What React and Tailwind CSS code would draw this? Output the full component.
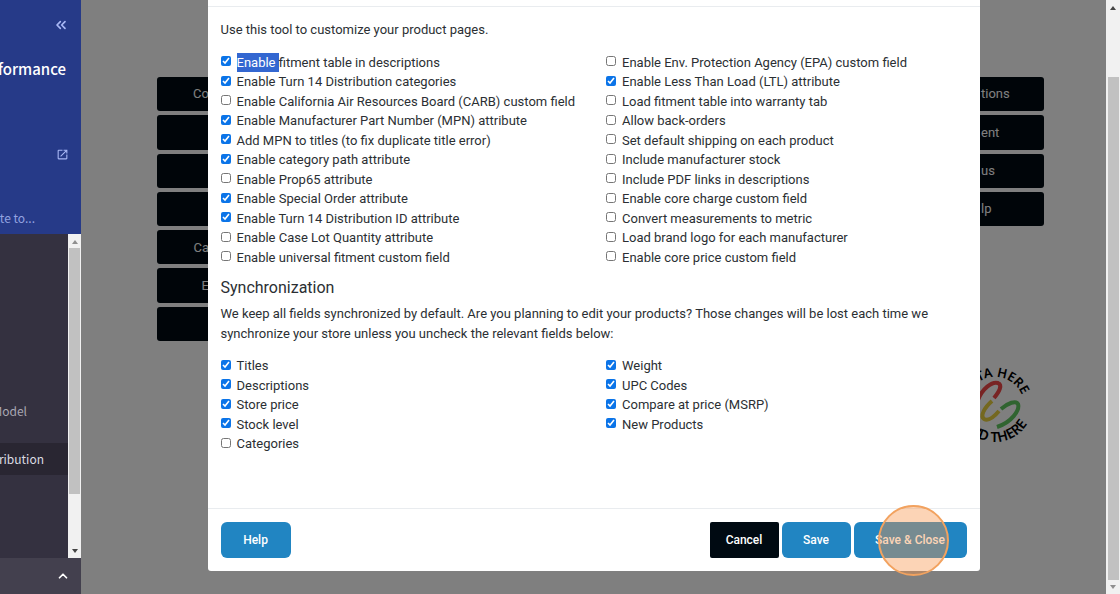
import React from "react";
import { ChevronsLeft, ChevronUp } from "lucide-react";
import { MdOpenInNew } from "react-icons/md";

const leftOptions = [
  ["fitment table in descriptions", true, "Enable "],
  ["Enable Turn 14 Distribution categories", true],
  ["Enable California Air Resources Board (CARB) custom field", false],
  ["Enable Manufacturer Part Number (MPN) attribute", true],
  ["Add MPN to titles (to fix duplicate title error)", true],
  ["Enable category path attribute", true],
  ["Enable Prop65 attribute", false],
  ["Enable Special Order attribute", true],
  ["Enable Turn 14 Distribution ID attribute", true],
  ["Enable Case Lot Quantity attribute", false],
  ["Enable universal fitment custom field", false],
];

const rightOptions = [
  ["Enable Env. Protection Agency (EPA) custom field", false],
  ["Enable Less Than Load (LTL) attribute", true],
  ["Load fitment table into warranty tab", false],
  ["Allow back-orders", false],
  ["Set default shipping on each product", false],
  ["Include manufacturer stock", false],
  ["Include PDF links in descriptions", false],
  ["Enable core charge custom field", false],
  ["Convert measurements to metric", false],
  ["Load brand logo for each manufacturer", false],
  ["Enable core price custom field", false],
];

const leftSync = [
  ["Titles", true],
  ["Descriptions", true],
  ["Store price", true],
  ["Stock level", true],
  ["Categories", false],
];

const rightSync = [
  ["Weight", true],
  ["UPC Codes", true],
  ["Compare at price (MSRP)", true],
  ["New Products", true],
];

function Option({ label, checked, selected }) {
  return (
    <label className="flex items-center gap-[6px] whitespace-pre">
      <input type="checkbox" defaultChecked={checked} className="mb-[2px] size-[10px] shrink-0 accent-[#0b74e8]" />
      <span>
        {selected && <span className="inline-block bg-[#3367d1] text-white">{selected}</span>}
        {label}
      </span>
    </label>
  );
}

function OptionColumn({ items }) {
  return (
    <div className="flex flex-col">
      {items.map(([label, checked, selected]) => (
        <Option key={label} label={label} checked={checked} selected={selected} />
      ))}
    </div>
  );
}

function Arrow({ down, className }) {
  return (
    <svg viewBox="0 0 6 4" className={className} fill="currentColor" aria-hidden="true">
      <path d={down ? "M0 0h6L3 4z" : "M0 4h6L3 0z"} />
    </svg>
  );
}

function Sidebar() {
  return (
    <aside className="flex w-[81px] shrink-0 flex-col overflow-hidden bg-[#343140] font-['Noto_Sans_CJK_SC',sans-serif]">
      <div className="flex h-[234px] shrink-0 flex-col items-end bg-[#263a88] pt-[17px]">
        <button aria-label="Collapse" className="mr-3 text-[#a9b8f5]">
          <ChevronsLeft className="size-4" strokeWidth={2.5} />
        </button>
        <p className="mt-6 mr-[15px] text-[15px] leading-6 font-medium text-white">formance</p>
        <a href="#store" aria-label="Open store" className="mt-[67px] mr-[12px] text-[#a9b8f5]">
          <MdOpenInNew className="size-[13px]" />
        </a>
        <p className="mt-[47px] mr-[46px] text-[12px] leading-5 whitespace-nowrap text-[#93a3e0]">ate to...</p>
      </div>
      <div className="flex flex-1">
        <nav className="flex flex-1 flex-col items-end overflow-hidden pt-[161px] text-[12px] text-[#a9a7b2]">
          <a href="#model" className="flex h-8 items-center pr-[41px]">Model</a>
          <a href="#distribution" className="mt-4 flex h-8 w-full items-center justify-end bg-[#292632] pr-[24px] text-[#dcdbe2]">tribution</a>
        </nav>
        <div className="flex w-[13px] flex-col items-center justify-between bg-[#f1f1f1] pt-[6px] pb-[5px]">
          <Arrow className="h-[4px] w-[6px] shrink-0 text-[#8f8f8f]" />
          <div className="mt-[4px] h-[246px] w-[11px] bg-[#c1c1c1]" />
          <Arrow down className="mt-auto h-[4px] w-[6px] shrink-0 text-[#444]" />
        </div>
      </div>
      <div className="flex h-[36px] shrink-0 items-center justify-end bg-[#43404e] pr-[11px]">
        <button aria-label="Expand" className="text-white">
          <ChevronUp className="size-[14px]" strokeWidth={3} />
        </button>
      </div>
    </aside>
  );
}

function Logo() {
  return (
    <svg viewBox="0 0 90 90" className="mr-[15px] size-[90px] overflow-visible" role="img" aria-label="Data here and there">
      <defs>
        <path id="topArc" d="M16 45a29 29 0 0 1 58 0" />
        <path id="bottomArc" d="M7 43a38 38 0 0 0 76 0" />
      </defs>
      <g fontFamily="Noto Sans, sans-serif" fontWeight="600" fontSize="13" fill="#000">
        <text textAnchor="middle"><textPath href="#topArc" startOffset="50%">DATA HERE</textPath></text>
        <text textAnchor="middle" fontSize="14"><textPath href="#bottomArc" startOffset="50%">AND THERE</textPath></text>
      </g>
      <g fill="none" strokeWidth="4">
        <path stroke="#f04848" d="M28 39C32 28 42 20 48 22c5 2 1 9-4 15" />
        <path stroke="#e8d040" d="M42 40c-8 7-12 15-8 18 4 2 10-2 15-8" />
        <path stroke="#60c860" d="M51 48c7-6 15-9 17-5 2 6-6 18-21 23" />
      </g>
    </svg>
  );
}

const tile = "flex-1 rounded-[3px] bg-[#000a12] text-[13px] text-white";

export default function App() {
  return (
    <div className="flex min-h-screen overflow-hidden bg-white font-[Roboto,sans-serif] text-[13px] leading-normal text-[#2b2f33]">
      <Sidebar />
      <main className="relative flex-1">
        <div className="flex items-start justify-between px-[62px] pt-[77px] pl-[76px]">
          <div className="flex h-[264px] w-[140px] flex-col gap-1">
            {["Co", "", "", "", "Ca", "E", ""].map((text, i) => (
              <button key={i} aria-label={text || "Menu item"} className={`${tile} pr-[88px] text-right`}>{text}</button>
            ))}
          </div>
          <div className="flex h-[149px] w-[140px] flex-col gap-1">
            {["tions", "ent", "us", "lp"].map((text) => (
              <button key={text} className={`${tile} pl-[77px] text-left`}>{text}</button>
            ))}
          </div>
        </div>
        <div className="absolute inset-x-0 top-[361px] flex justify-end pr-[51px]"><Logo /></div>

        <div className="absolute inset-0 flex items-start justify-center bg-black/50">
          <section role="dialog" aria-label="Product page settings" className="mx-4 w-[772px] rounded-b-[3px] bg-white">
            <header className="h-[7px] border-b border-[#e9ecef]" />
            <div className="pt-[13px] pr-[12px] pb-[54px] pl-[13px]">
              <p>Use this tool to customize your product pages.</p>
              <div className="mt-[13px] grid grid-cols-2 gap-x-6">
                <OptionColumn items={leftOptions} />
                <OptionColumn items={rightOptions} />
              </div>
              <h2 className="mt-[9px] mb-[4px] text-[16px] leading-6">Synchronization</h2>
              <p>
                We keep all fields synchronized by default. Are you planning to edit your products? Those changes will be lost each time we synchronize your store unless you uncheck the relevant fields below:
              </p>
              <div className="mt-[13px] grid grid-cols-2 gap-x-6">
                <OptionColumn items={leftSync} />
                <OptionColumn items={rightSync} />
              </div>
            </div>
            <footer className="flex gap-[3px] border-t border-[#e9ecef] px-[13px] py-[13px] text-[12px] font-medium text-white">
              <button className="mr-auto h-9 w-[70px] rounded-[6px] bg-[#2185c2]">Help</button>
              <button className="h-9 w-[69px] rounded-[2px] bg-[#000a12]">Cancel</button>
              <button className="h-9 w-[69px] rounded-[6px] bg-[#2185c2]">Save</button>
              <button className="relative h-9 w-[113px] rounded-[6px] bg-[#2185c2]">
                Save &amp; Close
                <span className="absolute top-[-17px] left-[24px] size-[71px] rounded-full border-2 border-[#f2a25f] bg-[#f79348]/40" />
              </button>
            </footer>
          </section>
        </div>
      </main>
      <div className="flex w-[14px] shrink-0 flex-col items-center bg-[#f1f1f1] pt-[6px] pb-[5px]">
        <Arrow className="h-[4px] w-[6px] shrink-0 text-[#444]" />
        <div className="mt-[67px] w-[11px] flex-1 bg-[#c1c1c1]" />
        <Arrow down className="mt-[5px] h-[4px] w-[6px] shrink-0 text-[#8f8f8f]" />
      </div>
    </div>
  );
}
